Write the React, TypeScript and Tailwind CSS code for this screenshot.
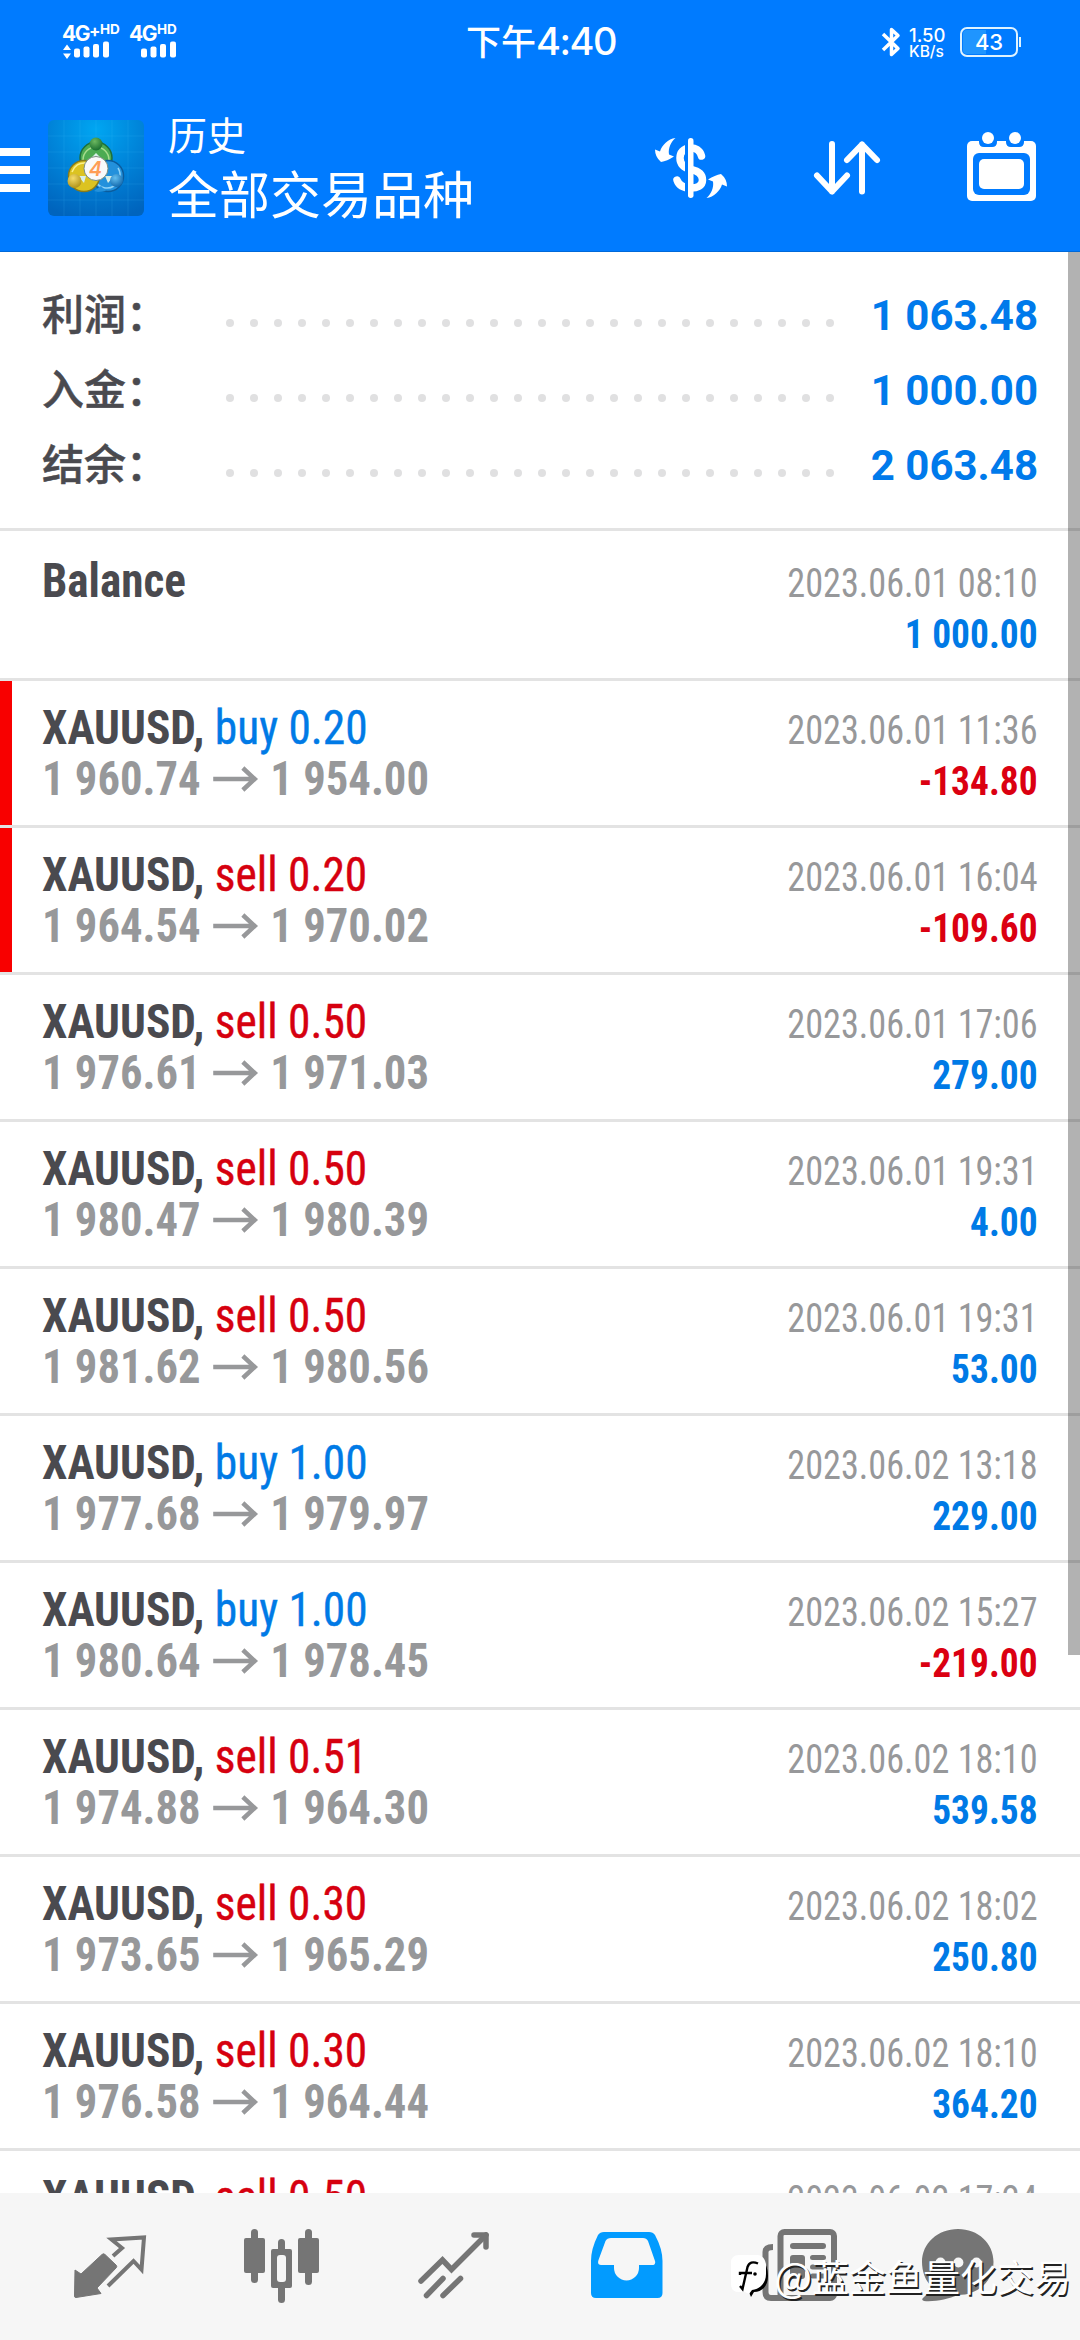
import type { ReactNode } from "react";

type Trade = {
  side: "buy" | "sell";
  volume: string;
  open: string;
  close: string;
  time: string;
  profit: string;
  marked?: boolean;
};

const summary = [
  { label: "利润：", value: "1 063.48" },
  { label: "入金：", value: "1 000.00" },
  { label: "结余：", value: "2 063.48" },
];

const trades: Trade[] = [
  { side: "buy", volume: "0.20", open: "1 960.74", close: "1 954.00", time: "2023.06.01 11:36", profit: "-134.80", marked: true },
  { side: "sell", volume: "0.20", open: "1 964.54", close: "1 970.02", time: "2023.06.01 16:04", profit: "-109.60", marked: true },
  { side: "sell", volume: "0.50", open: "1 976.61", close: "1 971.03", time: "2023.06.01 17:06", profit: "279.00" },
  { side: "sell", volume: "0.50", open: "1 980.47", close: "1 980.39", time: "2023.06.01 19:31", profit: "4.00" },
  { side: "sell", volume: "0.50", open: "1 981.62", close: "1 980.56", time: "2023.06.01 19:31", profit: "53.00" },
  { side: "buy", volume: "1.00", open: "1 977.68", close: "1 979.97", time: "2023.06.02 13:18", profit: "229.00" },
  { side: "buy", volume: "1.00", open: "1 980.64", close: "1 978.45", time: "2023.06.02 15:27", profit: "-219.00" },
  { side: "sell", volume: "0.51", open: "1 974.88", close: "1 964.30", time: "2023.06.02 18:10", profit: "539.58" },
  { side: "sell", volume: "0.30", open: "1 973.65", close: "1 965.29", time: "2023.06.02 18:02", profit: "250.80" },
  { side: "sell", volume: "0.30", open: "1 976.58", close: "1 964.44", time: "2023.06.02 18:10", profit: "364.20" },
  { side: "sell", volume: "0.50", open: "1 976.58", close: "1 964.44", time: "2023.06.02 17:24", profit: "520.00" },
];

function Bars({ arrows }: { arrows?: boolean }) {
  return (
    <svg width="48" height="19" viewBox="0 0 48 19" fill="#fff">
      {arrows && <path d="M5 3.5L9 9H1zM1 12.5H9L5 18z" />}
      <rect x="12" y="7.5" width="6" height="9" rx="2" />
      <rect x="21.5" y="5.5" width="6" height="11" rx="2" />
      <rect x="31" y="3" width="6" height="13.5" rx="2" />
      <rect x="41" y="0.5" width="6" height="16" rx="2" />
    </svg>
  );
}

function StatusBar() {
  return (
    <div className="flex h-[84px] items-start font-['Inter','Noto_Sans_CJK_SC',sans-serif] text-white">
      <div className="ml-[62px] mt-[23px] flex w-[404px] gap-[7px]">
        <div className="w-[60px]">
          <div className="flex h-[18px] items-start leading-none tracking-[-1.5px]">
            <span className="text-[21px] font-bold">4G</span>
            <span className="text-[17px] font-bold">+</span>
            <span className="ml-[1px] text-[13.5px] font-bold tracking-[0px]">HD</span>
          </div>
          <Bars arrows />
        </div>
        <div className="w-[60px]">
          <div className="flex h-[18px] items-start leading-none tracking-[-1.5px]">
            <span className="text-[21px] font-bold">4G</span>
            <span className="ml-[1px] text-[13.5px] font-bold tracking-[0px]">HD</span>
          </div>
          <Bars />
        </div>
      </div>
      <div className="mt-[16px] flex w-[415px] items-baseline whitespace-nowrap leading-[50px]">
        <span className="text-[35px] font-medium">下午</span>
        <span className="text-[38px] font-medium tracking-[-1.5px]">4:40</span>
      </div>
      <svg className="mt-[27px]" width="20" height="30" viewBox="0 0 20 30" fill="none" stroke="#fff" strokeWidth="3.5" strokeLinejoin="round">
        <path d="M2 7L17 21.5L10.5 27.5V2.5L17 8.5L2 23" />
      </svg>
      <div className="ml-[8px] mt-[26px] w-[51px] font-medium">
        <div className="text-[18.5px] leading-[18px]">1.50</div>
        <div className="text-[15.5px] leading-[16px]">KB/s</div>
      </div>
      <div className="mt-[27px] flex items-center">
        <div className="flex h-[30px] w-[58px] items-center justify-center rounded-[7px] border-[2.5px] border-[#dff3ff] bg-[linear-gradient(90deg,#1f95ff_44%,transparent_44%)] bg-clip-content p-[1px] text-[22px] font-medium leading-none">
          43
        </div>
        <div className="ml-[1px] h-[10px] w-[2px] bg-[#dff3ff]" />
      </div>
    </div>
  );
}

function AppLogo() {
  return (
    <svg width="96" height="96" viewBox="0 0 96 96">
      <defs>
        <radialGradient id="logoBg" cx="0.5" cy="0.1" r="0.95">
          <stop offset="0" stopColor="#00a6f2" />
          <stop offset="0.55" stopColor="#0080d6" />
          <stop offset="1" stopColor="#0064bd" />
        </radialGradient>
        <radialGradient id="green" cx="0.4" cy="0.3" r="0.8">
          <stop offset="0" stopColor="#6cb860" />
          <stop offset="1" stopColor="#0f6428" />
        </radialGradient>
        <radialGradient id="gold" cx="0.4" cy="0.3" r="0.8">
          <stop offset="0" stopColor="#f5dc6a" />
          <stop offset="1" stopColor="#a98a10" />
        </radialGradient>
        <radialGradient id="azure" cx="0.4" cy="0.3" r="0.8">
          <stop offset="0" stopColor="#63bff0" />
          <stop offset="1" stopColor="#0a5fa6" />
        </radialGradient>
      </defs>
      <rect width="96" height="96" rx="6" fill="url(#logoBg)" />
      <path d="M0 16H96M0 32H96M0 48H96M0 64H96M0 80H96M16 0V96M32 0V96M48 0V96M64 0V96M80 0V96" stroke="#4fc3ff" strokeOpacity="0.14" />
      <circle cx="48" cy="38" r="16" fill="#4cab52" stroke="#1d6f3c" strokeWidth="1.5" />
      <path d="M35 40A13 13 0 0 1 61 40" fill="none" stroke="#a5dc8c" strokeWidth="1.5" />
      <circle cx="60" cy="56" r="15.5" fill="#2391dc" stroke="#0b5c9d" strokeWidth="1.5" />
      <path d="M48 62A13 13 0 0 0 70 48" fill="none" stroke="#8fd3f8" strokeWidth="1.5" />
      <circle cx="36" cy="56" r="15.5" fill="#dcc321" stroke="#877a1c" strokeWidth="1.5" />
      <path d="M24 52A13 13 0 0 1 38 43" fill="none" stroke="#fbf08c" strokeWidth="1.5" />
      <path d="M36 63L30 56H38ZM60 63L66 56H57ZM48 33L43 38H53Z" fill="#d8efe8" />
      <path d="M46 71L53 66L58 71L50 72Z" fill="#2391dc" />
      <circle cx="48" cy="24" r="6.5" fill="url(#green)" />
      <circle cx="26.5" cy="61" r="7" fill="url(#gold)" />
      <circle cx="68.5" cy="60.5" r="6.5" fill="url(#azure)" />
      <circle cx="48" cy="48.500" r="12" fill="#fafafa" stroke="#7b8d80" />
      <text x="47.5" y="55.5" textAnchor="middle" fontFamily="Inter, sans-serif" fontSize="20" fontStyle="italic" fontWeight="600" fill="#ff9d55">4</text>
    </svg>
  );
}

function Header() {
  return (
    <header className="h-[252px] border-b border-[#0069d9] bg-[#007bff]">
      <StatusBar />
      <div className="flex items-start pt-[28px]">
        <div className="mt-[36px] flex w-[30px] flex-col gap-[10px]">
          <div className="h-[8px] bg-white" />
          <div className="h-[8px] bg-white" />
          <div className="h-[8px] bg-white" />
        </div>
        <div className="ml-[18px] mt-[8px] w-[120px]">
          <AppLogo />
        </div>
        <div className="w-[482px] font-['Noto_Sans_CJK_SC',sans-serif] text-white">
          <div className="text-[39px] leading-[42px]">历史</div>
          <div className="mt-[8px] text-[51px] leading-[60px]">全部交易品种</div>
        </div>
        <svg className="mt-[24px]" width="82" height="64" viewBox="649 136 82 64">
          <path
            d="M700.5 156C699 150 694 148 690 148C682 148 679 153 679 158C679 165 684 168 690 169.5C697 171 701.5 174 701.5 180C701.5 186 696 188 690 188C683 188 678 186 676 180"
            fill="none"
            stroke="#fff"
            strokeWidth="7.5"
            strokeLinecap="round"
          />
          <rect x="684" y="138" width="4" height="60" fill="#007bff" />
          <rect x="687" y="138" width="5.5" height="60" rx="2.7" fill="#fff" />
          <path d="M674.5 138C667 139 661 145 659 151.5L654 149.5Q654 157 660 162Q666 161 673 156.5L668 154.5C667 148 670 142 674.5 138Z" fill="#fff" />
          <path transform="rotate(180 690 168)" d="M674.5 138C667 139 661 145 659 151.5L654 149.5Q654 157 660 162Q666 161 673 156.5L668 154.5C667 148 670 142 674.5 138Z" fill="#fff" />
        </svg>
        <svg className="ml-[76px] mt-[24px]" width="80" height="64" viewBox="807 136 80 64" fill="none" stroke="#fff" strokeWidth="6" strokeLinecap="round" strokeLinejoin="round">
          <path d="M831 144V191.5M816 175.5L831 191.5L846 175.5M861 191.5V144.5M846 160L861 144.5L876 160" />
        </svg>
        <svg className="ml-[73px] mt-[18px]" width="80" height="75" viewBox="960 130 80 75" fill="#fff">
          <rect x="966" y="141" width="69" height="60" rx="5" />
          <path d="M978 138V142Q978 147 983 147H991Q996 147 996 142V138ZM1005 138V142Q1005 147 1010 147H1018Q1023 147 1023 142V138Z" fill="#007bff" />
          <circle cx="987" cy="138" r="6" />
          <circle cx="1014" cy="138" r="6" />
          <rect x="972" y="153" width="57" height="42" rx="6" fill="#007bff" />
          <rect x="978" y="159" width="45" height="30" rx="5" />
        </svg>
      </div>
    </header>
  );
}

function SummaryRow({ label, value }: { label: string; value: string }) {
  return (
    <div className="flex h-[75px] items-center pl-[42px] pr-[42px]">
      <div className="-mt-[8px] w-[184px] font-['Noto_Sans_CJK_SC',sans-serif] text-[42px] font-medium leading-[75px] text-[#4a4a4f] [-webkit-text-stroke:0.5px_#4a4a4f]">{label}</div>
      <div className="mt-[14px] flex w-[608px] justify-between">
        {Array.from({ length: 26 }, (_, i) => (
          <span key={i} className="size-[8px] rounded-full bg-[#e0e0e1]" />
        ))}
      </div>
      <div className="ml-auto text-[42px] font-bold leading-[75px] text-[#007aeb]">{value}</div>
    </div>
  );
}

function Row({ left, time, profit, marked }: { left: ReactNode; time: string; profit: string; marked?: boolean }) {
  return (
    <div className={`flex h-[147px] shrink-0 justify-between border-b-[3px] border-[#e3e3e3] pr-[42px] ${marked ? "bg-[linear-gradient(90deg,#f80000_12px,transparent_12px)] bg-clip-padding" : ""}`}>
      <div className="pl-[42px] pt-[21px] text-[48px] leading-[51px]">{left}</div>
      <div className="pt-[24px] text-right text-[40px] leading-[51px]">
        <div className="origin-right scale-x-[0.905] text-[#97989a]">{time}</div>
        <div className={`origin-right scale-x-[0.935] font-bold ${profit.startsWith("-") ? "text-[#db0011]" : "text-[#007ae6]"}`}>{profit}</div>
      </div>
    </div>
  );
}

function TradeRow({ trade }: { trade: Trade }) {
  return (
    <Row
      time={trade.time}
      profit={trade.profit}
      marked={trade.marked}
      left={
        <>
          <div className="origin-left scale-x-[0.945]">
            <span className="font-bold text-[#4a4a4f]">XAUUSD, </span>
            <span className={trade.side === "buy" ? "text-[#007ae6] [-webkit-text-stroke:0.4px_#007ae6]" : "text-[#d6000f] [-webkit-text-stroke:0.4px_#d6000f]"}>
              {trade.side} {trade.volume}
            </span>
          </div>
          <div className="flex origin-left scale-x-[0.93] items-center font-bold text-[#97989a]">
            <span>{trade.open}</span>
            <svg className="ml-[13px] mr-[13px]" width="49" height="26" viewBox="0 0 46 26" preserveAspectRatio="none" fill="none" stroke="#97989a" strokeWidth="4.5">
              <path d="M0 13H43M30 2L42 13L30 24" />
            </svg>
            <span>{trade.close}</span>
          </div>
        </>
      }
    />
  );
}

function Nav() {
  return (
    <nav className="flex h-[147px] shrink-0 bg-[#f6f6f6] pl-[22px]">
      {/* quotes */}
      <svg width="173" height="147" viewBox="22 53 173 147">
        <path d="M75 130L81 134L102 114.5Q103.5 113 105 114.5L116 125Q117.5 126.5 116 128L97 148L101 153.5L76 157.5Q74.5 157.5 74.5 156Z" fill="#757575" stroke="#757575" strokeLinejoin="round" />
        <path d="M113 116L122 108L111.5 99.5L144 97.5L141.5 129.5L133.5 121L108 146" fill="none" stroke="#757575" strokeWidth="4" />
      </svg>
      {/* chart */}
      <svg width="173" height="147" viewBox="195 53 173 147" fill="#757575">
        <rect x="244" y="98" width="21" height="35" rx="2" />
        <rect x="251" y="89" width="7" height="54" rx="3.5" />
        <rect x="271" y="109" width="21" height="39" rx="2" />
        <rect x="278" y="99" width="7" height="64" rx="3.5" />
        <rect x="277" y="115" width="9" height="27" rx="3" fill="#f6f6f6" />
        <rect x="298" y="98" width="21" height="35" rx="2" />
        <rect x="305" y="89" width="7" height="56" rx="3.5" />
      </svg>
      {/* trade */}
      <svg width="173" height="147" viewBox="368 53 173 147" fill="none" stroke="#757575" strokeWidth="5.5" strokeLinecap="round">
        <path d="M421 141L442.5 120L451.5 129.5L486 95" />
        <path d="M474 95H486V107" strokeLinejoin="round" />
        <path d="M426.5 155.5L443 138.5M443 155.5L460.5 138.5" />
      </svg>
      {/* history */}
      <svg width="173" height="147" viewBox="541 53 173 147">
        <path
          fillRule="evenodd"
          fill="#029bff"
          d="M604 92H649Q653 92 655 95Q662.5 109 662.5 121V153Q662.5 158 657.5 158H596Q591 158 591 153V121Q591 109 598 95Q600 92 604 92ZM611 98Q607 98 605.5 101L598.5 120Q597 125 601 125H614V128A12.5 12.5 0 0 0 639 128V125H652Q656 125 655 121L648 101Q646.5 98 643 98Z"
        />
      </svg>
      {/* news */}
      <svg width="173" height="147" viewBox="714 53 173 147" fill="#757575">
        <rect x="780.5" y="92" width="53.5" height="66" rx="4" fill="none" stroke="#757575" strokeWidth="6" />
        <path d="M773 107Q765.5 107 765.5 112V152Q765.5 158 771 158H830" fill="none" stroke="#757575" strokeWidth="6" />
        <rect x="790" y="103" width="36" height="6" rx="3" />
        <rect x="790" y="115" width="15" height="24" rx="3" />
        <rect x="810" y="115" width="16" height="5" rx="2.5" />
        <rect x="810" y="124.5" width="16" height="5" rx="2.5" />
        <rect x="810" y="133.5" width="16" height="5" rx="2.5" />
      </svg>
      {/* messages */}
      <svg width="173" height="147" viewBox="887 53 173 147">
        <path d="M958 89C978 89 993.5 103 993.5 122C993.5 141 978 155 958 155C948 159 935 162 924 161Q921 160 923 158Q930 152 931 146C925 140 922 131 922 122C922 103 938 89 958 89Z" fill="#757575" />
        <g fill="#f6f6f6">
          <circle cx="940.5" cy="122.5" r="5" />
          <circle cx="958.4" cy="122.5" r="5" />
          <circle cx="976.5" cy="122.5" r="5" />
        </g>
      </svg>
    </nav>
  );
}

function Watermark() {
  return (
    <div className="absolute bottom-[39px] right-[9px] flex items-center whitespace-nowrap">
      <svg width="38" height="46" viewBox="727 119 38 46">
        <path d="M760 127Q765 132 765 142C765 152 759 158 751 158L748 163L745 156Z" fill="#000" />
        <path d="M736 121H754Q761 121 763 130V140C763 149 757 155 749 156L746 160L742 158H736Q728 158 728 150V129Q728 121 736 121Z" fill="#fff" />
        <path d="M755 129.5Q747 126 744.5 133L739.5 155L737 152M737 141V139H749" stroke="#000" strokeWidth="2.4" fill="none" />
        <circle cx="752" cy="140" r="1.8" />
      </svg>
      <span className="ml-[6px] font-['Noto_Sans_CJK_SC',sans-serif] text-[37px] leading-[50px] text-white [text-shadow:1.5px_1.5px_0_#222]">
        <span className="text-[40px]">@</span>蓝金鱼量化交易
      </span>
    </div>
  );
}

export default function App() {
  return (
    <div className="relative flex h-[2340px] w-[1080px] flex-col overflow-hidden bg-white font-['Roboto','Noto_Sans_CJK_SC',sans-serif]">
      <Header />
      <main className="relative flex h-[1941px] flex-col overflow-hidden">
        <div className="h-[279px] shrink-0 border-b-[3px] border-[#e3e3e3] pt-[26px]">
          {summary.map((s) => (
            <SummaryRow key={s.label} {...s} />
          ))}
        </div>
        <div className="flex flex-col font-['Roboto_Condensed','Roboto'] [font-stretch:75%]">
          <div className="pt-[3px]">
            <Row time="2023.06.01 08:10" profit="1 000.00" left={<div className="origin-left scale-x-[0.94] font-bold text-[#4a4a4f]">Balance</div>} />
          </div>
          {trades.map((t, i) => (
            <TradeRow key={i} trade={t} />
          ))}
        </div>
        <div className="absolute right-0 top-0 h-[1403px] w-[12px] bg-black/30" />
      </main>
      <Nav />
      <Watermark />
    </div>
  );
}
